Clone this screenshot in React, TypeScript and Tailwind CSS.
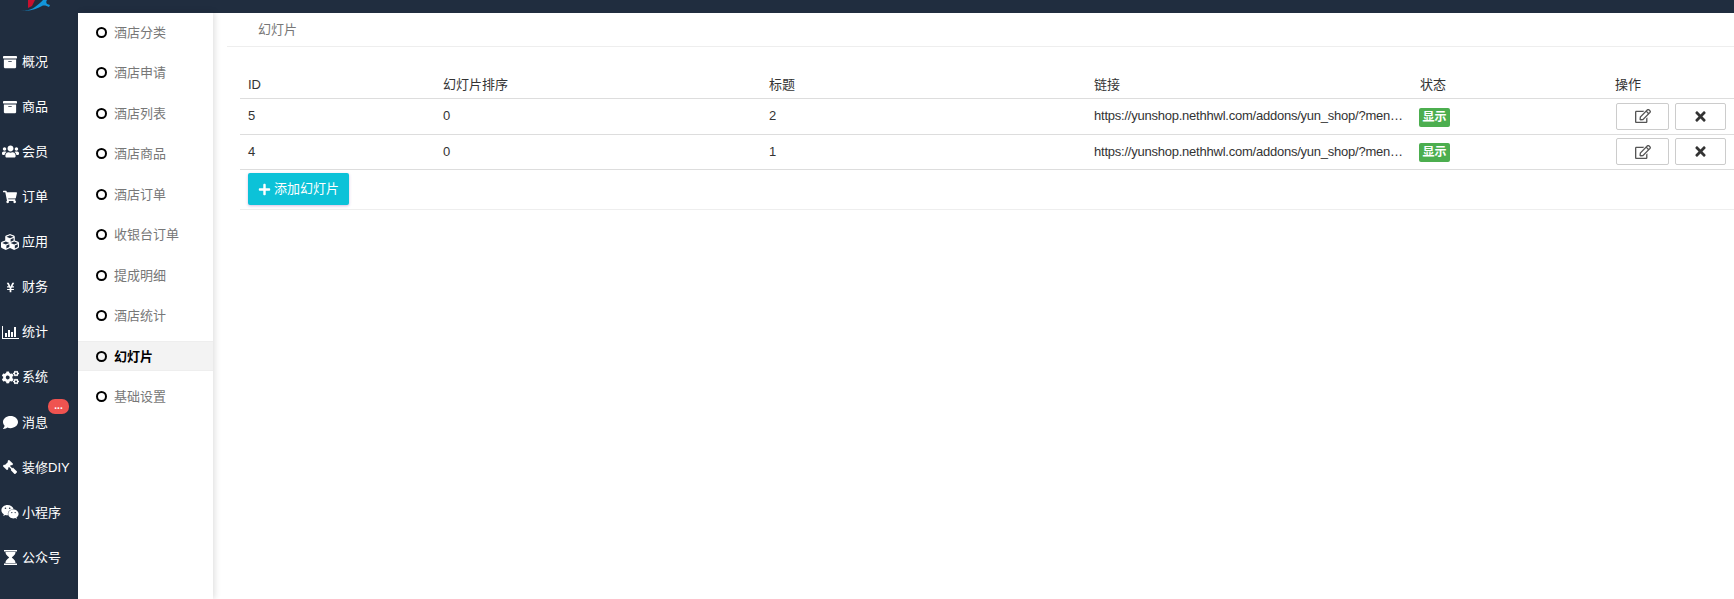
import { FaArchive, FaUsers, FaShoppingCart, FaCubes, FaYenSign, FaCogs, FaComment, FaGavel, FaWeixin, FaRegEdit, FaTimes, FaPlus } from 'react-icons/fa';
import type { ReactNode } from 'react';

const fontStack = '[font-family:"Liberation_Sans","Noto_Sans_CJK_SC",sans-serif]';

function BarChartIcon() {
  return (
    <svg width="17" height="13" viewBox="0 0 17 13" fill="currentColor">
      <path d="M0 0h1v12h16v1H0z" />
      <path d="M3 7h2v4H3zM6 4h2v7H6zM9 6h2v5H9zM12 1h2v10h-2z" />
    </svg>
  );
}

function HourglassIcon() {
  return (
    <svg width="13" height="15" viewBox="0 0 13 15" fill="currentColor">
      <path d="M0 0h13v1.5H0zM0 13.5h13V15H0z" />
      <path d="M1.5 2h10c0 3-2.5 4-3.7 5.5C9 9 11.5 10 11.5 13h-10c0-3 2.5-4 3.7-5.5C4 6 1.5 5 1.5 2z" />
    </svg>
  );
}

const mainNav: { icon: ReactNode; label: string; badge?: boolean }[] = [
  { icon: <FaArchive size={14} />, label: '概况' },
  { icon: <FaArchive size={14} />, label: '商品' },
  { icon: <FaUsers size={17} />, label: '会员' },
  { icon: <FaShoppingCart size={14} />, label: '订单' },
  { icon: <FaCubes size={18} />, label: '应用' },
  { icon: <FaYenSign size={11} />, label: '财务' },
  { icon: <BarChartIcon />, label: '统计' },
  { icon: <FaCogs size={17} />, label: '系统' },
  { icon: <FaComment size={15} />, label: '消息', badge: true },
  { icon: <FaGavel size={14} className="-scale-x-100" />, label: '装修DIY' },
  { icon: <FaWeixin size={18} />, label: '小程序' },
  { icon: <HourglassIcon />, label: '公众号' },
];

const subNav = ['酒店分类', '酒店申请', '酒店列表', '酒店商品', '酒店订单', '收银台订单', '提成明细', '酒店统计', '幻灯片', '基础设置'];

const slides = [
  { id: 5, order: 0, title: '2' },
  { id: 4, order: 0, title: '1' },
];

const link = 'https://yunshop.nethhwl.com/addons/yun_shop/?menu=/pages/hotel/detail&id=1';

function Logo() {
  return (
    <svg width="32" height="13" viewBox="0 0 32 13" className="ml-[20px]">
      <path d="M8 0h7l-3 6-4 2z" fill="#c8102e" />
      <path d="M1 10c5 1 10 0 14-3 3-2 6-5 8-7h4c-1 1-1 3 0 4l3 1-1 2c-2-1-5-2-7-1-6 3-13 6-21 4z" fill="#1296db" />
    </svg>
  );
}

export default function App() {
  return (
    <div className={`flex flex-col h-[599px] overflow-hidden bg-white text-[13px] ${fontStack}`}>
      <div className="h-[13px] bg-[#202d3f] shrink-0 overflow-hidden">
        <Logo />
      </div>
      <div className="flex flex-1 min-h-0">
        {/* main nav */}
        <div className="w-[78px] shrink-0 bg-[#202d3f] text-white pt-[26px]">
          {mainNav.map((item) => (
            <div key={item.label} className="relative h-[45.1px] flex items-center">
              <span className="w-[22px] pr-[2px] flex justify-center shrink-0">{item.icon}</span>
              <span className="whitespace-nowrap">{item.label}</span>
              {item.badge && (
                <span className="absolute left-[48px] -top-[1px] w-[21px] h-[15px] rounded-[7px] bg-[#ef5350] text-[10px] leading-[14px] text-center font-bold">...</span>
              )}
            </div>
          ))}
        </div>

        {/* sub nav */}
        <div className="w-[135px] shrink-0 -mt-[1px] shadow-[2px_0_6px_rgba(0,0,0,0.12)] z-10">
          {subNav.map((label) => {
            const active = label === '幻灯片';
            return (
              <div key={label} className="h-[40.5px] flex items-center">
                <div
                  className={`w-full flex items-center pl-[18px] ${active ? 'h-[30px] bg-[#f3f3f3] border-y border-[#eee] text-black font-bold' : 'text-[#777]'}`}
                >
                  <span className="w-[11px] h-[11px] rounded-full border-2 border-black mr-[7px] shrink-0" />
                  {label}
                </div>
              </div>
            );
          })}
        </div>

        {/* content */}
        <div className="flex-1 min-w-0 overflow-hidden">
          <div className="ml-[14px] h-[34px] border-b border-[#eee] pl-[31px] flex items-center text-[#777]">幻灯片</div>
          <div className="ml-[27px] mt-[23px] w-[1630px]">
            <table className="w-full table-fixed border-collapse text-[#333]">
              <colgroup>
                <col className="w-[195px]" />
                <col className="w-[326px]" />
                <col className="w-[325px]" />
                <col className="w-[326px]" />
                <col className="w-[195px]" />
                <col />
              </colgroup>
              <thead>
                <tr className="h-[28px] border-b border-[#ddd] text-left">
                  <th className="font-normal px-2 pt-[1px]">ID</th>
                  <th className="font-normal px-2 pt-[1px]">幻灯片排序</th>
                  <th className="font-normal px-2 pt-[1px]">标题</th>
                  <th className="font-normal px-2 pt-[1px]">链接</th>
                  <th className="font-normal px-2 pt-[1px]">状态</th>
                  <th className="font-normal px-2 pt-[1px]">操作</th>
                </tr>
              </thead>
              <tbody>
                {slides.map((s, i) => (
                  <tr key={s.id} className={`border-b border-[#ddd] ${i === 0 ? 'h-[36px]' : 'h-[35px]'}`}>
                    <td className="px-2">{s.id}</td>
                    <td className="px-2">{s.order}</td>
                    <td className="px-2">{s.title}</td>
                    <td className="px-2 truncate tracking-[-0.23px]">{link}</td>
                    <td className="pl-[7px] pr-2 pt-[1px]">
                      <span className="inline-block bg-[#4cae4f] text-white font-bold text-[12px] leading-[19px] px-[3.5px] rounded-[2px] align-middle">显示</span>
                    </td>
                    <td className="pl-[9px]">
                      <div className="flex gap-[6px]">
                        <button className="w-[53px] h-[27px] border border-[#ccc] rounded-[2px] flex items-center justify-center text-[#555]">
                          <FaRegEdit size={16} />
                        </button>
                        <button className="w-[51px] h-[27px] border border-[#ccc] rounded-[2px] flex items-center justify-center text-[#333]">
                          <FaTimes size={15} />
                        </button>
                      </div>
                    </td>
                  </tr>
                ))}
              </tbody>
            </table>
            <div className="h-[40px] border-b border-[#eee] flex items-center pl-2">
              <button className="h-[32px] w-[101px] bg-[#0cc2d8] text-white rounded-[2px] shadow-[0_1px_3px_rgba(120,40,160,0.3)] flex items-center justify-center gap-[3px]">
                <FaPlus size={13} />
                添加幻灯片
              </button>
            </div>
          </div>
        </div>
      </div>
    </div>
  );
}
